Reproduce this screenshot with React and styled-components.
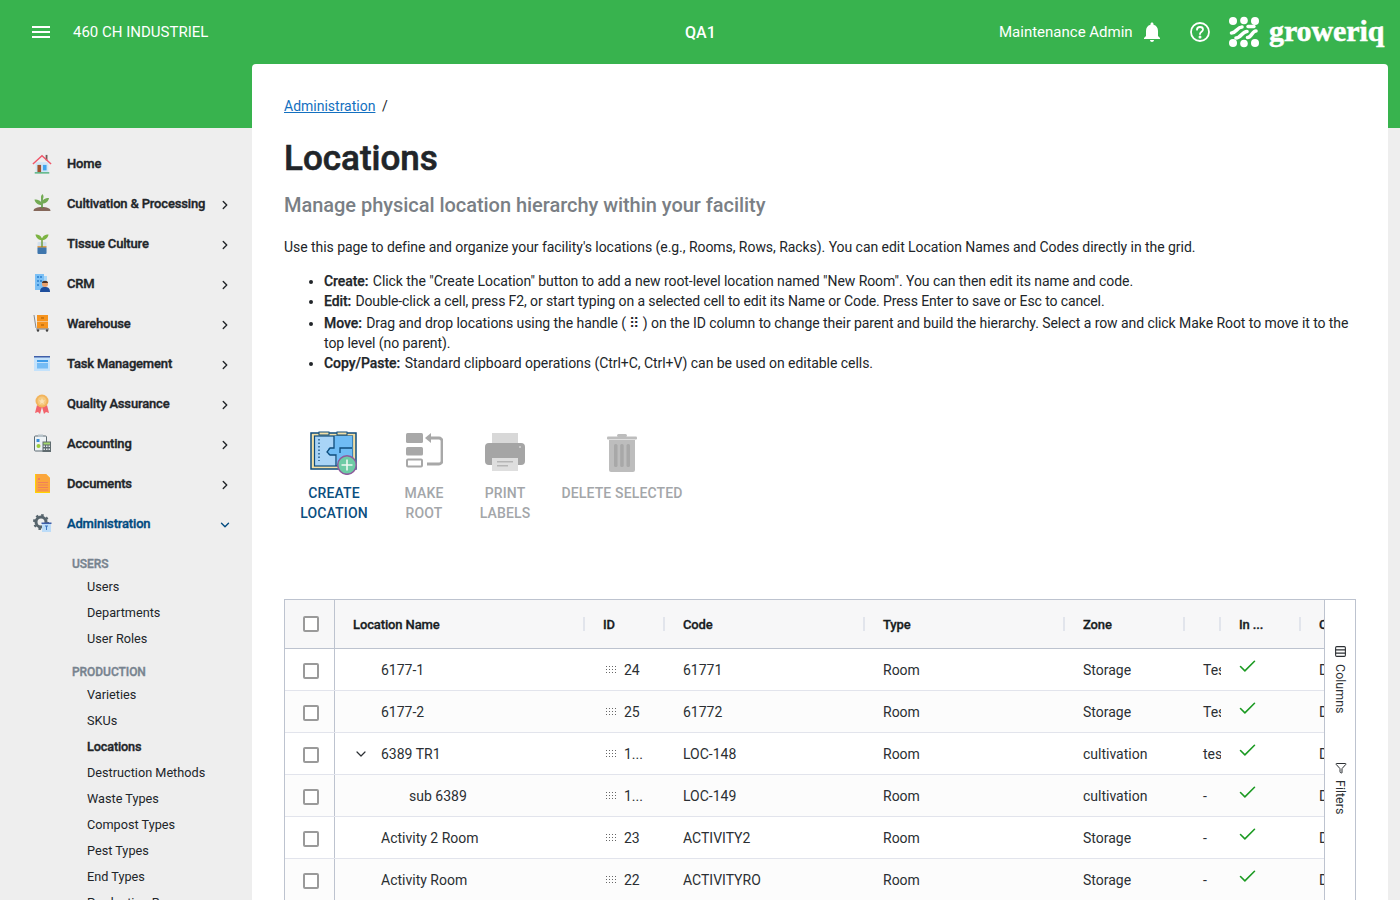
import React from "react";
import styled, { createGlobalStyle } from "styled-components";
import { ChevronRight, ChevronDown, Check, Columns3, Filter } from "lucide-react";

const GlobalStyle = createGlobalStyle`
  html, body {
    margin: 0;
    height: 900px;
    overflow: hidden;
    background: #eeeeee;
    font-family: Roboto, "Liberation Sans", sans-serif;
    color: #212529;
  }
  * { box-sizing: border-box; }
`;

const GREEN = "#38b34e";

const Page = styled.div`
  position: relative;
  width: 1400px;
  height: 900px;
  overflow: hidden;
`;

const GreenBand = styled.div`
  height: 128px;
  background: ${GREEN};
`;

const TopBar = styled.header`
  height: 64px;
  display: flex;
  align-items: center;
  padding: 0 0 0 32px;
  color: #fff;
`;

const Burger = styled.div`
  width: 18px;
  height: 12px;
  margin-right: 23px;
  border-top: 2px solid #fff;
  border-bottom: 2px solid #fff;
  position: relative;
  &::after {
    content: "";
    position: absolute;
    left: 0;
    right: 0;
    top: 3px;
    height: 2px;
    background: #fff;
  }
`;

const TopLeft = styled.div`
  width: 612px;
  flex: none;
  font-size: 15px;
`;

const TopCenter = styled.div`
  width: 314px;
  flex: none;
  font-size: 16px;
  font-weight: 500;
`;

const TopUser = styled.div`
  width: 141px;
  flex: none;
  font-size: 15px;
  white-space: nowrap;
`;

const TopIcons = styled.div`
  display: flex;
  align-items: center;
`;

const IconGap = styled.span`
  width: ${p => p.$w}px;
  flex: none;
`;

const Layout = styled.div`
  display: flex;
  margin-top: -64px;
  height: 836px;
`;

const Side = styled.nav`
  width: 252px;
  flex: none;
  padding-top: 79px;
`;

const NavRow = styled.div`
  height: 40px;
  display: flex;
  align-items: center;
  padding-left: 32px;
  color: ${p => (p.$active ? "#004a7f" : "#212529")};
  font-size: 13px;
  font-weight: 500;
  letter-spacing: -0.17px;
  -webkit-text-stroke: 0.35px currentColor;
`;

const NavIcon = styled.span`
  width: 20px;
  height: 20px;
  flex: none;
  margin-right: 15px;
  display: flex;
`;

const NavLabel = styled.span`
  flex: 1;
  white-space: nowrap;
`;

const NavArrow = styled.span`
  width: 14px;
  margin: 3px 20px 0 0;
  display: flex;
  -webkit-text-stroke: 0;
`;

const SubGroup = styled.div`
  padding-left: 72px;
  margin-top: ${p => (p.$first ? "11px" : "10px")};
`;

const SubTitle = styled.div`
  font-size: 12px;
  font-weight: 500;
  line-height: 20px;
  letter-spacing: -0.05px;
  color: #77838f;
  -webkit-text-stroke: 0.35px currentColor;
`;

const SubItem = styled.div`
  font-size: 12.7px;
  line-height: 26px;
  padding-left: 15px;
  white-space: nowrap;
  color: #212529;
  font-weight: ${p => (p.$active ? 500 : 400)};
  ${p => p.$active && "-webkit-text-stroke: 0.35px currentColor; letter-spacing: -0.15px;"}
`;

const Card = styled.main`
  width: 1136px;
  height: 900px;
  flex: none;
  background: #fff;
  border-radius: 4px 4px 0 0;
  padding: 32px 32px 0;
  overflow: hidden;
`;

const Crumbs = styled.div`
  font-size: 14px;
  line-height: 20px;
  color: #212529;
`;

const CrumbLink = styled.a`
  color: #1370c0;
  text-decoration: underline;
  margin-right: 3px;
`;

const Title = styled.h1`
  margin: 23px 0 0;
  font-size: 35px;
  line-height: 40px;
  font-weight: 500;
  -webkit-text-stroke: 0.6px currentColor;
  color: #212529;
`;

const Subtitle = styled.h2`
  margin: 13px 0 0;
  font-size: 20px;
  line-height: 26px;
  font-weight: 500;
  letter-spacing: -0.04px;
  color: #7a7f85;
`;

const Intro = styled.p`
  margin: 19px 0 0;
  font-size: 14px;
  line-height: 20px;
  letter-spacing: -0.05px;
`;

const Bullets = styled.ul`
  margin: 14px 0 0;
  padding-left: 40px;
  font-size: 14px;
  line-height: 20px;
  b {
    font-weight: 500;
    margin-right: 1px;
    -webkit-text-stroke: 0.25px currentColor;
  }
`;

const Bullet = styled.li`
  margin-top: ${p => p.$top || 0}px;
  letter-spacing: ${p => p.$ls ?? -0.05}px;
`;

const Toolbar = styled.div`
  display: flex;
  margin-top: 55px;
  height: 171px;
  align-items: flex-start;
`;

const Tool = styled.div`
  width: ${p => p.$w}px;
  flex: none;
  display: flex;
  flex-direction: column;
  align-items: center;
  text-align: center;
  font-size: 14px;
  line-height: 20px;
  font-weight: 500;
  letter-spacing: 0.15px;
  color: ${p => (p.$disabled ? "#a3a6a9" : "#0b4f80")};
`;

const ToolIcon = styled.span`
  height: 50px;
  margin-bottom: 5px;
  padding-bottom: ${p => p.$lift || 0}px;
  display: flex;
  align-items: center;
`;

const Grid = styled.div`
  display: flex;
  width: 1072px;
  height: 400px;
  border: 1px solid #bdc3cf;
  position: relative;
`;

const GridBody = styled.div`
  flex: 1;
  min-width: 0;
  overflow: hidden;
`;

const GridRow = styled.div`
  display: flex;
  height: ${p => (p.$head ? 49 : 42)}px;
  background: ${p => (p.$head ? "#f7f7f8" : p.$odd ? "#fcfcfc" : "#fff")};
  border-bottom: 1px solid ${p => (p.$head ? "#bdc3cf" : "#e2e4ec")};
  font-size: 14px;
`;

const CheckCell = styled.div`
  width: 50px;
  flex: none;
  display: flex;
  align-items: center;
  justify-content: center;
  border-right: 1px solid #bdc3cf;
  padding-left: 2px;
`;

const Box = styled.span`
  width: 16px;
  height: 16px;
  margin-top: ${p => (p.$row ? 2 : 0)}px;
  border: 2px solid #9a9a9a;
  border-radius: 2px;
  background: #fff;
`;

const Cell = styled.div`
  width: ${p => p.$w}px;
  flex: none;
  display: flex;
  align-items: center;
  padding-left: ${p => p.$pad ?? 18}px;
  overflow: hidden;
  white-space: nowrap;
  position: relative;
  color: #2b2f33;
`;

const HeadCell = styled(Cell)`
  font-size: 13px;
  font-weight: 500;
  color: #181d1f;
  letter-spacing: -0.12px;
  -webkit-text-stroke: 0.3px currentColor;
  &::after {
    content: "";
    display: ${p => (p.$noSep ? "none" : "block")};
    position: absolute;
    right: 0;
    top: 17px;
    width: 2px;
    height: 14px;
    background: #e2e5ec;
  }
`;

const Grip = styled.span`
  width: 12px;
  height: 9px;
  margin-right: 7px;
  flex: none;
  background-image: radial-gradient(circle, #666 0.8px, transparent 0.9px);
  background-size: 3px 3px;
`;

const CheckMark = styled.span`
  display: flex;
  margin-top: -6px;
  color: #1b9a22;
`;

const SideBar = styled.div`
  width: 31px;
  flex: none;
  border-left: 1px solid #bdc3cf;
  background: #fff;
  display: flex;
  flex-direction: column;
  align-items: center;
  padding: 45px 0 0 1px;
  gap: 48px;
`;

const SideTab = styled.div`
  writing-mode: vertical-rl;
  display: flex;
  align-items: center;
  gap: 6px;
  font-size: 12.5px;
  color: #2b2f33;
`;

const RotatedIcon = styled.span`
  display: flex;
  transform: rotate(90deg);
`;

const House = () => (
  <svg width="22" height="22" viewBox="0 0 22 22">
    <rect x="15" y="1" width="2" height="6" fill="#6d5f5a" />
    <rect x="4" y="9" width="14" height="11" fill="#cfe6f7" />
    <path d="M1 11 11 2l10 9" fill="none" stroke="#f0566a" strokeWidth="1.6" />
    <rect x="6" y="12" width="4" height="8" fill="#a0522d" />
    <rect x="12" y="12" width="4" height="6" fill="#41a5ee" />
    <rect x="3" y="20" width="16" height="1.5" fill="#4caf7a" />
  </svg>
);

const Sprout = () => (
  <svg width="20" height="20" viewBox="0 0 20 20">
    <path d="M1.500 18c0-3 4-4 8.500-4s8.500 1 8.500 4z" fill="#85675a" />
    <rect x="9.200" y="5" width="1.600" height="10" fill="#5d9644" />
    <path d="M10 12C6 12 3 10 2.500 6.500c4 0 7.500 1.500 7.500 5.500zM10 10.500c4 0 6.500-2 7-5.500-4 0-7 1.500-7 5.500zM10 7C8.500 5 8.500 3 10.500 1c1.500 2 1.500 4-.5 6z" fill="#73ab54" />
  </svg>
);

const Tube = () => (
  <svg width="20" height="22" viewBox="0 0 20 22">
    <rect x="5.500" y="9" width="9" height="12" rx="1" fill="#d3e0ec" />
    <rect x="5.500" y="14" width="9" height="7" rx="1" fill="#3f76ad" />
    <rect x="5.500" y="13" width="9" height="1.500" fill="#e0a050" />
    <rect x="9.300" y="5" width="1.400" height="9" fill="#6c9b34" />
    <path d="M10 7C6.500 7 4 5 3.500 1.500 7 1.500 10 3 10 7zM10 7c3.500 0 6-2 6.500-5.500C13 1.500 10 3 10 7z" fill="#7cb342" />
  </svg>
);

const Crm = () => (
  <svg width="20" height="20" viewBox="0 0 20 20">
    <rect x="3" y="1" width="9" height="16" fill="#7cc0f5" />
    <path d="M12 3h3v6h-3z" fill="#a9d7f8" />
    <g fill="#3c8fd8">
      <rect x="5" y="3" width="2" height="2" /><rect x="8" y="3" width="2" height="2" />
      <rect x="5" y="7" width="2" height="2" /><rect x="8" y="7" width="2" height="2" />
      <rect x="5" y="11" width="2" height="2" />
    </g>
    <circle cx="13" cy="11" r="3" fill="#e8a06c" />
    <path d="M10 10c0-3 6-3 6 0z" fill="#4a3328" />
    <path d="M8 19c0-4 2-5 5-5s5 1 5 5z" fill="#1e4e9c" />
  </svg>
);

const Cart = () => (
  <svg width="20" height="20" viewBox="0 0 20 20">
    <path d="M2 2l2 13" stroke="#888" strokeWidth="1" fill="none" />
    <rect x="5" y="2" width="11" height="6.5" fill="#f7941e" />
    <rect x="5" y="9" width="11" height="6.5" fill="#f7941e" />
    <rect x="9" y="4.5" width="3" height="1" fill="#a85d00" />
    <rect x="9" y="11.5" width="3" height="1" fill="#a85d00" />
    <rect x="4" y="15.5" width="13" height="1" fill="#777" />
    <circle cx="6" cy="17.5" r="1.2" fill="#444" />
    <circle cx="15" cy="17.5" r="1.2" fill="#444" />
  </svg>
);

const Tasks = () => (
  <svg width="20" height="20" viewBox="0 0 20 20">
    <rect x="2" y="3" width="16" height="15" fill="#c4e2fb" />
    <rect x="2" y="3" width="16" height="1.5" fill="#3f5ea8" />
    <rect x="5" y="7" width="11" height="2" fill="#3d9be9" />
    <rect x="5" y="10" width="11" height="5.5" fill="#75bcf5" />
  </svg>
);

const Medal = () => (
  <svg width="20" height="22" viewBox="0 0 20 22">
    <path d="M5 12 3 20l3-1 2 2 2-7zM15 12l2 8-3-1-2 2-2-7z" fill="#f2646c" />
    <circle cx="10" cy="8" r="6.5" fill="#f2b45c" />
    <circle cx="10" cy="8" r="4.5" fill="#f5c97f" />
    <path d="M10 5l1 2.2 2.2.2-1.7 1.5.5 2.2L10 10l-2 1.1.5-2.2L6.800 7.400 9 7.200z" fill="#fbe3b5" />
  </svg>
);

const Calc = () => (
  <svg width="20" height="20" viewBox="0 0 20 20">
    <rect x="2.500" y="3" width="12" height="15" rx="1" fill="#eef3f6" stroke="#5c6b73" />
    <rect x="6" y="1.500" width="5" height="2.500" fill="#b6c2c9" />
    <rect x="4.500" y="6" width="3" height="3" fill="#3c8fd8" />
    <circle cx="6.500" cy="13" r="2" fill="#9ccc3c" />
    <rect x="10.500" y="8.500" width="8.500" height="10.500" fill="#5f6b6f" />
    <rect x="11.500" y="9.500" width="6.500" height="2" fill="#a4d86f" />
    <g fill="#dfe5e7">
      <rect x="11.500" y="12.500" width="1.500" height="1.500" /><rect x="14" y="12.500" width="1.500" height="1.500" /><rect x="16.500" y="12.500" width="1.500" height="1.500" />
      <rect x="11.500" y="15.500" width="1.500" height="1.500" /><rect x="14" y="15.500" width="1.500" height="1.500" /><rect x="16.500" y="15.500" width="1.500" height="1.500" />
    </g>
  </svg>
);

const Doc = () => (
  <svg width="20" height="22" viewBox="0 0 20 22">
    <path d="M3 1h11l4 4v15H3z" fill="#ffd400" />
    <path d="M4 1h10l4 4v14H4z" fill="#fba63c" />
    <g fill="#ef7f5a">
      <rect x="6" y="5" width="2" height="2" />
      <rect x="6" y="9" width="10" height="1" /><rect x="6" y="11.500" width="10" height="1" />
      <rect x="6" y="14" width="10" height="1" /><rect x="6" y="16.500" width="10" height="1" />
    </g>
  </svg>
);

const Gear = () => (
  <svg width="20" height="20" viewBox="0 0 20 20">
    <circle cx="9" cy="9" r="5" fill="none" stroke="#56646c" strokeWidth="3" />
    <circle cx="9" cy="9" r="7" fill="none" stroke="#56646c" strokeWidth="2" strokeDasharray="2.500 3" />
    <rect x="10" y="10" width="9" height="9" fill="#bcdcf8" />
    <rect x="9.500" y="9.500" width="10" height="1.500" fill="#3f5ea8" />
    <path d="M13 13h3M14.500 13v4" stroke="#3f76c0" strokeWidth="1" />
  </svg>
);

const Bell = () => (
  <svg width="24" height="24" viewBox="0 0 24 24" fill="#fff">
    <path d="M12 22c1.100 0 2-.900 2-2h-4c0 1.100.900 2 2 2zm6-6v-5c0-3.100-1.600-5.600-4.500-6.300V4c0-.800-.700-1.500-1.500-1.500s-1.500.700-1.500 1.500v.700C7.600 5.400 6 7.900 6 11v5l-2 2v1h16v-1z" />
  </svg>
);

const Help = () => (
  <svg width="22" height="22" viewBox="0 0 22 22" fill="none" stroke="#fff" strokeWidth="1.800">
    <circle cx="11" cy="11" r="9" />
    <path d="M8 8.700c0-1.700 1.300-2.700 3-2.700s3 1 3 2.500c0 2.200-3 2.200-3 4.500" strokeLinecap="round" />
    <circle cx="11" cy="16" r=".6" fill="#fff" />
  </svg>
);

const LogoMark = () => (
  <svg width="32" height="32" viewBox="0 0 32 32" fill="#fff">
    <circle cx="5" cy="5" r="4" /><circle cx="16" cy="4.500" r="3.800" /><circle cx="27" cy="5" r="4" />
    <circle cx="5" cy="27" r="4" /><circle cx="16" cy="27.500" r="3.800" /><circle cx="27" cy="27" r="4" />
    <path d="M3.500 17c5 0 5.500-6 10.500-6" fill="none" stroke="#fff" strokeWidth="3.600" strokeLinecap="round" />
    <path d="M8 22c5 0 6-6.500 11-6.500" fill="none" stroke="#fff" strokeWidth="3.600" strokeLinecap="round" />
    <path d="M19.500 21.500c4.500 0 4.500-6.500 8.500-6.500" fill="none" stroke="#fff" strokeWidth="3.600" strokeLinecap="round" />
    <path d="M20 10.500h6" fill="none" stroke="#fff" strokeWidth="3.400" strokeLinecap="round" />
  </svg>
);

const LogoText = styled.span`
  font-family: "Liberation Serif", serif;
  font-size: 30px;
  font-weight: 700;
  color: #fff;
  margin-left: 9px;
  letter-spacing: -0.1px;
  line-height: 32px;
  -webkit-text-stroke: 0.5px #fff;
  position: relative;
  top: -1px;
`;

const PlanIcon = () => (
  <svg width="48" height="44" viewBox="0 0 48 44">
    <rect x="1" y="2" width="45" height="36" fill="#f3dfa5" stroke="#0f4c7c" strokeWidth="1.500" />
    <rect x="4.500" y="5" width="38" height="30" fill="#a9d4f7" stroke="#0f4c7c" strokeWidth="1.200" />
    <path d="M24 5h18.500v30H27V24h-9v-7h6z" fill="#6fbcf5" />
    <path d="M24 5v12h-4l-3 4 3 3h6v11M42 17H30v5" fill="none" stroke="#0f4c7c" strokeWidth="1.300" />
    <rect x="9" y="1" width="10" height="3" fill="#f3dfa5" stroke="#0f4c7c" />
    <rect x="27" y="1" width="10" height="3" fill="#f3dfa5" stroke="#0f4c7c" />
    <path d="M9 8v22" stroke="#0f4c7c" strokeWidth="1.300" strokeDasharray="1.500 2" />
    <circle cx="37" cy="34" r="9.300" fill="#6dcba5" stroke="#8e5a9c" strokeWidth="1.500" />
    <path d="M37 28.500v11M31.500 34h11" stroke="#eef8f2" strokeWidth="1.600" />
  </svg>
);

const RootIcon = () => (
  <svg width="38" height="35" viewBox="0 0 38 35">
    <rect x="1" y="0" width="17" height="10" rx="1.500" fill="#a8a8a8" />
    <rect x="1" y="14" width="17" height="8.500" rx="1.500" fill="#a8a8a8" />
    <rect x="2" y="26.500" width="15" height="7" rx="1" fill="none" stroke="#a8a8a8" strokeWidth="2" />
    <path d="M25 5h9a3 3 0 0 1 3 3v20a3 3 0 0 1-3 3H22" fill="none" stroke="#a8a8a8" strokeWidth="2.800" />
    <path d="M26 0v10l-6-5z" fill="#a8a8a8" />
  </svg>
);

const PrintIcon = () => (
  <svg width="40" height="38" viewBox="0 0 40 38">
    <rect x="7" y="0" width="26" height="12" fill="#d8d8d8" />
    <rect x="0" y="10" width="40" height="22" rx="4" fill="#a5a5a5" />
    <circle cx="35" cy="14" r="1" fill="#d4d4d4" />
    <rect x="7" y="25" width="26" height="13" fill="#dedede" />
    <rect x="12" y="28" width="16" height="1.500" fill="#b5b5b5" />
    <rect x="12" y="32" width="11" height="1.500" fill="#b5b5b5" />
  </svg>
);

const TrashIcon = () => (
  <svg width="30" height="38" viewBox="0 0 30 38">
    <rect x="0" y="2.500" width="30" height="3" rx="1" fill="#bdbdbd" />
    <rect x="10" y="0" width="10" height="3" rx="1.500" fill="#bdbdbd" />
    <path d="M2 6h26v30a2 2 0 0 1-2 2H4a2 2 0 0 1-2-2z" fill="#bdbdbd" />
    <rect x="7" y="10" width="3.500" height="23" rx="1.500" fill="#a8a8a8" />
    <rect x="13.200" y="10" width="3.500" height="23" rx="1.500" fill="#a8a8a8" />
    <rect x="19.500" y="10" width="3.500" height="23" rx="1.500" fill="#a8a8a8" />
  </svg>
);

const NAV = [
  ["Home", House, false],
  ["Cultivation & Processing", Sprout, true],
  ["Tissue Culture", Tube, true],
  ["CRM", Crm, true],
  ["Warehouse", Cart, true],
  ["Task Management", Tasks, true],
  ["Quality Assurance", Medal, true],
  ["Accounting", Calc, true],
  ["Documents", Doc, true],
];

const ROWS = [
  { name: "6177-1", id: "24", code: "61771", zone: "Storage", extra: "Test" },
  { name: "6177-2", id: "25", code: "61772", zone: "Storage", extra: "Test" },
  { name: "6389 TR1", id: "1...", code: "LOC-148", zone: "cultivation", extra: "test", open: true },
  { name: "sub 6389", id: "1...", code: "LOC-149", zone: "cultivation", extra: "-", depth: 1 },
  { name: "Activity 2 Room", id: "23", code: "ACTIVITY2", zone: "Storage", extra: "-" },
  { name: "Activity Room", id: "22", code: "ACTIVITYRO", zone: "Storage", extra: "-" },
];

const COLS = [250, 80, 200, 200, 120, 36, 80, 60];

const NamePad = styled.span`
  display: flex;
  align-items: center;
  width: 28px;
  flex: none;
  margin-left: ${p => p.$depth * 28}px;
`;

export default function App() {
  return (
    <Page>
      <GlobalStyle />
      <GreenBand>
        <TopBar>
          <Burger />
          <TopLeft>460 CH INDUSTRIEL</TopLeft>
          <TopCenter>QA1</TopCenter>
          <TopUser>Maintenance Admin</TopUser>
          <TopIcons>
            <Bell />
            <IconGap $w={25} />
            <Help />
            <IconGap $w={17} />
            <LogoMark />
            <LogoText>groweriq</LogoText>
          </TopIcons>
        </TopBar>
      </GreenBand>
      <Layout>
        <Side>
          {NAV.map(([label, Icon, arrow]) => (
            <NavRow key={label}>
              <NavIcon><Icon /></NavIcon>
              <NavLabel>{label}</NavLabel>
              {arrow && <NavArrow><ChevronRight size={14} strokeWidth={2.4} /></NavArrow>}
            </NavRow>
          ))}
          <NavRow $active>
            <NavIcon><Gear /></NavIcon>
            <NavLabel>Administration</NavLabel>
            <NavArrow><ChevronDown size={14} strokeWidth={2.4} /></NavArrow>
          </NavRow>
          <SubGroup $first>
            <SubTitle>USERS</SubTitle>
            <SubItem>Users</SubItem>
            <SubItem>Departments</SubItem>
            <SubItem>User Roles</SubItem>
          </SubGroup>
          <SubGroup>
            <SubTitle>PRODUCTION</SubTitle>
            <SubItem>Varieties</SubItem>
            <SubItem>SKUs</SubItem>
            <SubItem $active>Locations</SubItem>
            <SubItem>Destruction Methods</SubItem>
            <SubItem>Waste Types</SubItem>
            <SubItem>Compost Types</SubItem>
            <SubItem>Pest Types</SubItem>
            <SubItem>End Types</SubItem>
            <SubItem>Production Runs</SubItem>
          </SubGroup>
        </Side>
        <Card>
          <Crumbs><CrumbLink>Administration</CrumbLink> /</Crumbs>
          <Title>Locations</Title>
          <Subtitle>Manage physical location hierarchy within your facility</Subtitle>
          <Intro>
            Use this page to define and organize your facility's locations (e.g., Rooms, Rows, Racks). You can edit Location Names and Codes directly in the grid.
          </Intro>
          <Bullets>
            <Bullet $ls={-0.06}><b>Create:</b> Click the "Create Location" button to add a new root-level location named "New Room". You can then edit its name and code.</Bullet>
            <Bullet $ls={-0.11}><b>Edit:</b> Double-click a cell, press F2, or start typing on a selected cell to edit its Name or Code. Press Enter to save or Esc to cancel.</Bullet>
            <Bullet $top={2} $ls={-0.065}><b>Move:</b> Drag and drop locations using the handle ( ⠿ ) on the ID column to change their parent and build the hierarchy. Select a row and click Make Root to move it to the top level (no parent).</Bullet>
            <Bullet $ls={-0.04}><b>Copy/Paste:</b> Standard clipboard operations (Ctrl+C, Ctrl+V) can be used on editable cells.</Bullet>
          </Bullets>
          <Toolbar>
            <Tool $w={100}><ToolIcon><PlanIcon /></ToolIcon>CREATE<br />LOCATION</Tool>
            <Tool $w={80} $disabled><ToolIcon $lift={5}><RootIcon /></ToolIcon>MAKE<br />ROOT</Tool>
            <Tool $w={82} $disabled><ToolIcon $lift={3}><PrintIcon /></ToolIcon>PRINT<br />LABELS</Tool>
            <Tool $w={152} $disabled><ToolIcon $lift={1}><TrashIcon /></ToolIcon>DELETE SELECTED</Tool>
          </Toolbar>
          <Grid>
            <GridBody>
              <GridRow $head>
                <CheckCell><Box /></CheckCell>
                <HeadCell $w={COLS[0]}>Location Name</HeadCell>
                <HeadCell $w={COLS[1]}>ID</HeadCell>
                <HeadCell $w={COLS[2]}>Code</HeadCell>
                <HeadCell $w={COLS[3]}>Type</HeadCell>
                <HeadCell $w={COLS[4]}>Zone</HeadCell>
                <HeadCell $w={COLS[5]} />
                <HeadCell $w={COLS[6]}>In ...</HeadCell>
                <HeadCell $w={COLS[7]} $noSep>Class</HeadCell>
              </GridRow>
              {ROWS.map((r, i) => (
                <GridRow key={r.name} $odd={i % 2 === 1}>
                  <CheckCell><Box $row /></CheckCell>
                  <Cell $w={COLS[0]} $pad={18}>
                    <NamePad $depth={r.depth || 0}>
                      {r.open && <ChevronDown size={16} strokeWidth={1.8} />}
                    </NamePad>
                    {r.name}
                  </Cell>
                  <Cell $w={COLS[1]} $pad={20}><Grip />{r.id}</Cell>
                  <Cell $w={COLS[2]}>{r.code}</Cell>
                  <Cell $w={COLS[3]}>Room</Cell>
                  <Cell $w={COLS[4]}>{r.zone}</Cell>
                  <Cell $w={COLS[5]}>{r.extra}</Cell>
                  <Cell $w={COLS[6]} $pad={16}>
                    <CheckMark><Check size={21} strokeWidth={1.8} /></CheckMark>
                  </Cell>
                  <Cell $w={COLS[7]}>D</Cell>
                </GridRow>
              ))}
            </GridBody>
            <SideBar>
              <SideTab><RotatedIcon><Columns3 size={13} strokeWidth={2} /></RotatedIcon>Columns</SideTab>
              <SideTab><Filter size={12} strokeWidth={2} />Filters</SideTab>
            </SideBar>
          </Grid>
        </Card>
      </Layout>
    </Page>
  );
}
